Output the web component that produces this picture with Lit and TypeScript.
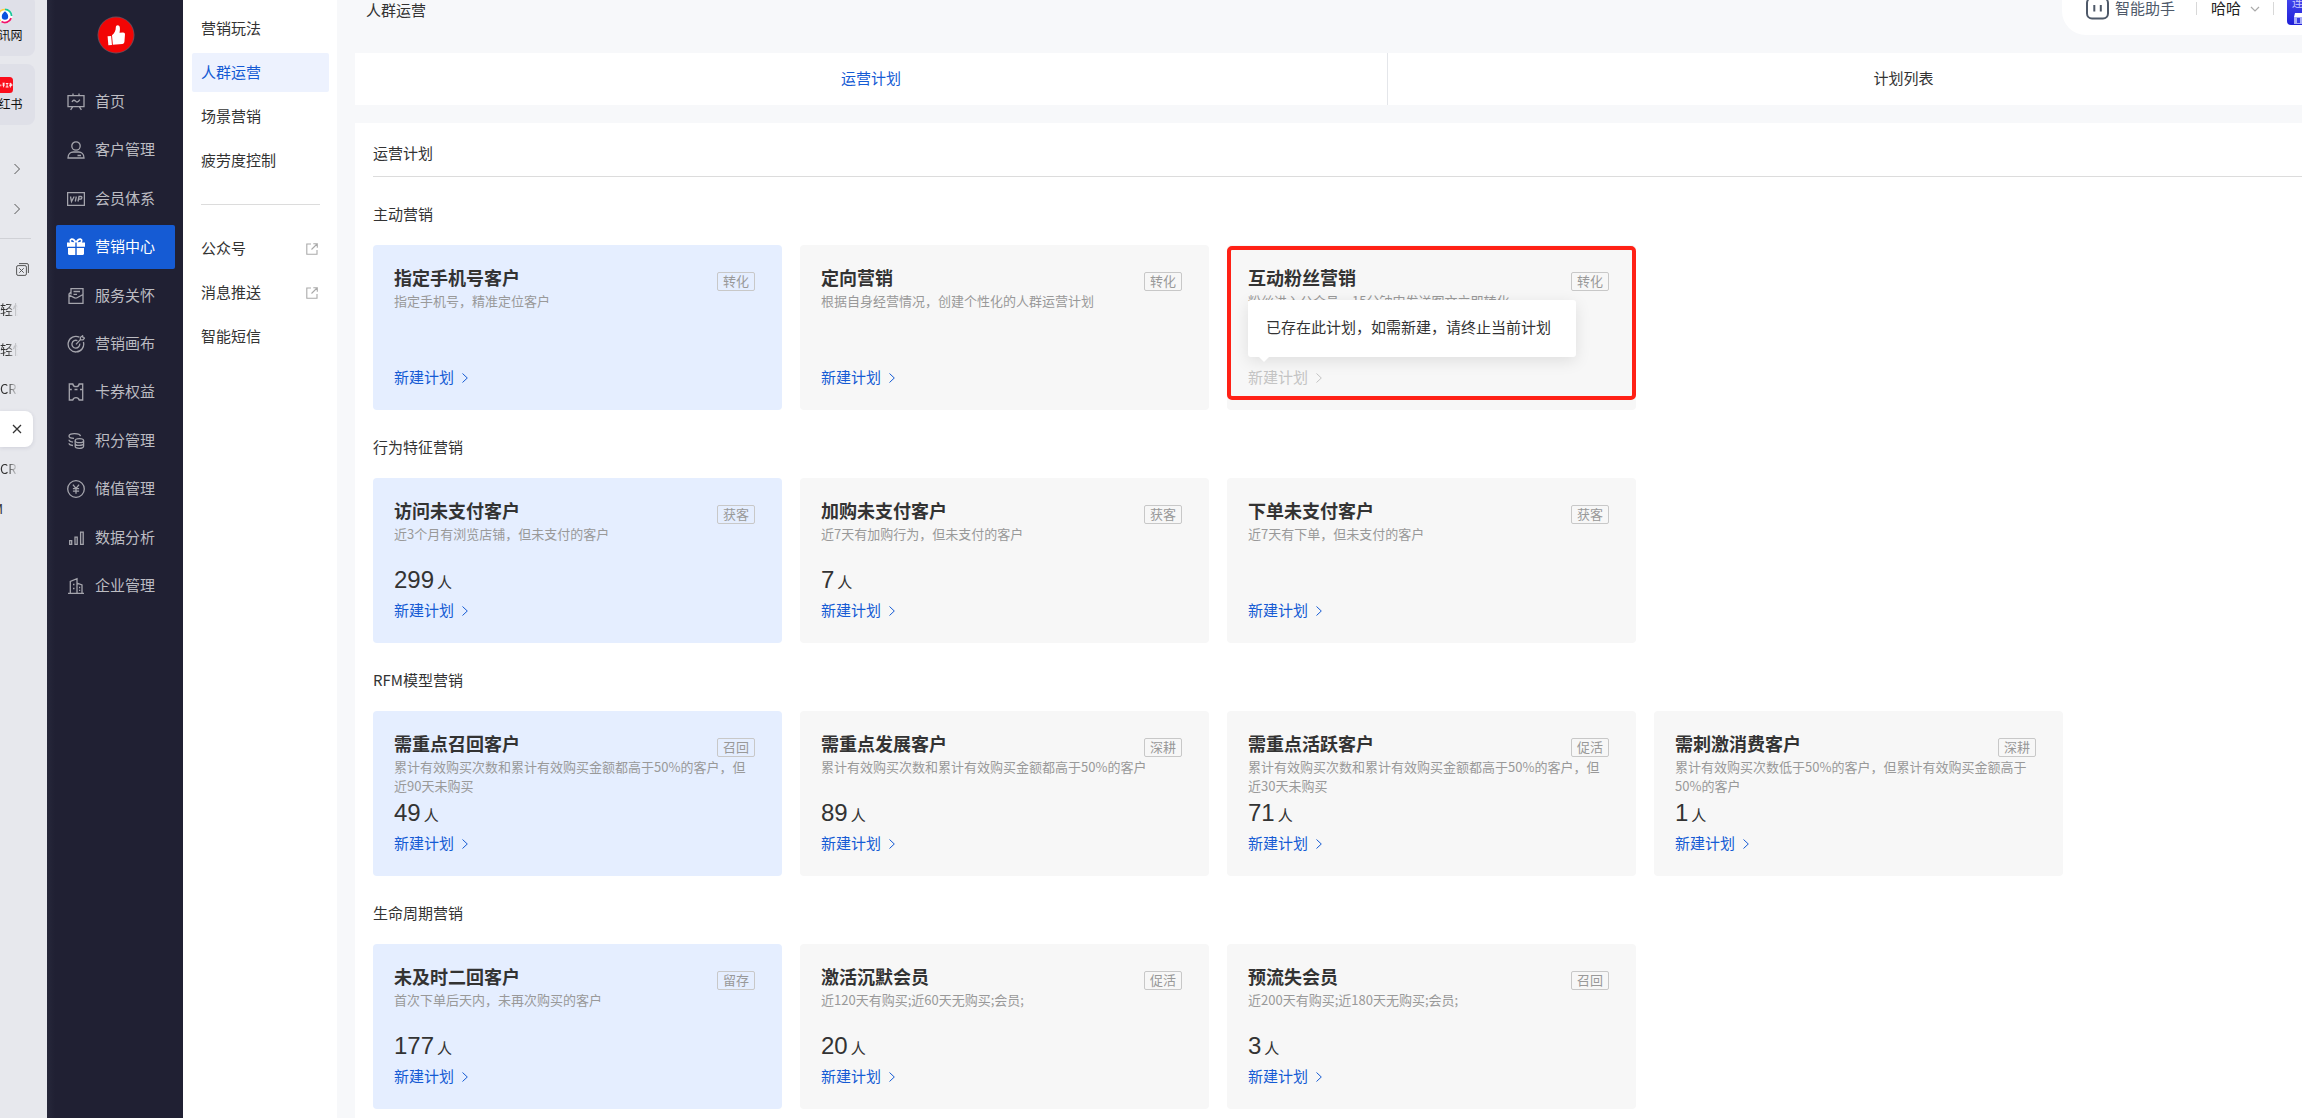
import { LitElement, html, css, svg, nothing, TemplateResult } from "lit";
import { customElement, property } from "lit/decorators.js";
import { classMap } from "lit/directives/class-map.js";

interface Plan {
  title: string;
  desc: string;
  tag: string;
  count?: number;
  notice?: string;
}

interface Section {
  name: string;
  plans: Plan[];
}

const SECTIONS: Section[] = [
  {
    name: "主动营销",
    plans: [
      { title: "指定手机号客户", desc: "指定手机号，精准定位客户", tag: "转化" },
      { title: "定向营销", desc: "根据自身经营情况，创建个性化的人群运营计划", tag: "转化" },
      {
        title: "互动粉丝营销",
        desc: "粉丝进入公众号，15分钟内发送图文立即转化",
        tag: "转化",
        notice: "已存在此计划，如需新建，请终止当前计划",
      },
    ],
  },
  {
    name: "行为特征营销",
    plans: [
      { title: "访问未支付客户", desc: "近3个月有浏览店铺，但未支付的客户", tag: "获客", count: 299 },
      { title: "加购未支付客户", desc: "近7天有加购行为，但未支付的客户", tag: "获客", count: 7 },
      { title: "下单未支付客户", desc: "近7天有下单，但未支付的客户", tag: "获客" },
    ],
  },
  {
    name: "RFM模型营销",
    plans: [
      { title: "需重点召回客户", desc: "累计有效购买次数和累计有效购买金额都高于50%的客户，但近90天未购买", tag: "召回", count: 49 },
      { title: "需重点发展客户", desc: "累计有效购买次数和累计有效购买金额都高于50%的客户", tag: "深耕", count: 89 },
      { title: "需重点活跃客户", desc: "累计有效购买次数和累计有效购买金额都高于50%的客户，但近30天未购买", tag: "促活", count: 71 },
      { title: "需刺激消费客户", desc: "累计有效购买次数低于50%的客户，但累计有效购买金额高于50%的客户", tag: "深耕", count: 1 },
    ],
  },
  {
    name: "生命周期营销",
    plans: [
      { title: "未及时二回客户", desc: "首次下单后天内，未再次购买的客户", tag: "留存", count: 177 },
      { title: "激活沉默会员", desc: "近120天有购买;近60天无购买;会员;", tag: "促活", count: 20 },
      { title: "预流失会员", desc: "近200天有购买;近180天无购买;会员;", tag: "召回", count: 3 },
    ],
  },
];

const ICONS: Record<string, TemplateResult> = {
  board: svg`<path d="M1 2.700h16v11H1zM6 .6v1.600M12 .6v1.600M5.600 13.900l-2 3M12.400 13.900l2 3M5 9c1-2.200 2.400-2.200 3.600-.8s2.400 1 4.200-1.600"/>`,
  user: svg`<circle cx="9" cy="5" r="4.200"/><path d="M1 17c0-4 2.600-6 5.400-6h5.200c2.800 0 5.400 2 5.400 6zM10.500 14.500H14"/>`,
  vip: svg`<path d="M.6 2.700h16.800v12.600H.6z"/><path d="M3.500 6.500l1 5 2.700-5M9.300 6.500l-1 5M11 11.500l1-5h2c1.400 0 1.200 2.700-.8 2.700h-1.600"/>`,
  gift: svg`<path fill="currentColor" stroke="none" d="M0 4.500h3.200C1.500 2.500 3 .3 5 .3c1.800 0 3 1.200 4 2.700 1-1.500 2.200-2.700 4-2.700 2 0 3.500 2.200 1.800 4.200H18v4.200H9.700V4.500H8.300v4.200H0zM5 1.900c-1.200 0-1.400 1.600 0 2.200l2.300.2C6.800 3 6 1.900 5 1.900zm8 0c-1 0-1.800 1.100-2.300 2.400l2.300-.2c1.400-.6 1.200-2.200 0-2.200zM1 10h7.300v7H2.200C1.500 17 1 16.500 1 15.800zm8.700 0H17v5.800c0 .7-.5 1.200-1.200 1.200H9.700z"/>`,
  care: svg`<path d="M4 7.500V1.700h12V9M4 5L2 7v9.300h14V7.500l-6 3.300c-.8.500-1.600.5-2.400 0L2 8M6.500 4.500h6.500M6.500 7.300h3.500"/>`,
  target: svg`<path d="M12.400 2.200A7.800 7.800 0 1 0 16.400 7M10.400 5.600a3.900 3.900 0 1 0 2.300 3M9 9.400l4.600-5M13.300 4.700l.2-2.400L15.600.8l.4 1.700 1.600.5-1.600 1.900z"/>`,
  coupon: svg`<path d="M2.300 1h3.500c.4 1.800 1.600 2.700 3.200 2.700S11.800 2.800 12.200 1h3.500v16h-3.500c-.4-1.500-1.600-2.300-3.200-2.300S6.200 15.500 5.800 17H2.300zM2.300 6.500h2.500M13 6.500h2.700M7.500 6.500h3"/>`,
  coins: svg`<path d="M13.500 4.200C13 .8 2 .6 2 4c0 1.400 2 2.300 5 2.400M2 7.800c0 1.300 1.700 2 4 2.300M2 11.300c0 1.200 1.700 2 4 2.200"/><ellipse cx="12.400" cy="8.700" rx="4.200" ry="2"/><path d="M8.200 8.700v5.600c0 2.800 8.400 2.800 8.400 0V8.700M8.200 11.500c0 2.600 8.400 2.600 8.400 0"/>`,
  yen: svg`<circle cx="9" cy="9" r="8.300"/><path d="M5.900 4.700L9 8.400l3.100-3.700M9 8.400v5.400M5.900 8.700h6.200M5.900 11.200h6.200"/>`,
  chart: svg`<path d="M2.700 11.700h2v3.600h-2zM8 8.200h2.200v7.100H8zM13.600 3.200h2.600v12.100h-2.600z"/>`,
  building: svg`<path d="M1 16.300h16M3.300 16V4.500L10 1.700V16M10 6.200l5 1.800v8M6 7.500h1.500M6 11.500h1.500M12 10.500h1.200M12 13.300h1.200"/>`,
};

const MENU: [string, string][] = [
  ["board", "首页"],
  ["user", "客户管理"],
  ["vip", "会员体系"],
  ["gift", "营销中心"],
  ["care", "服务关怀"],
  ["target", "营销画布"],
  ["coupon", "卡券权益"],
  ["coins", "积分管理"],
  ["yen", "储值管理"],
  ["chart", "数据分析"],
  ["building", "企业管理"],
];

const arrow = html`<svg class="arrow" viewBox="0 0 8 12" aria-hidden="true"><path d="M1.500 1.500L6.300 6l-4.800 4.500" /></svg>`;

const FONT = css`
  :host {
    font-family: "Liberation Sans", "Noto Sans CJK SC", sans-serif;
    font-size: 15px;
    line-height: 22px;
    color: #333;
  }
  * {
    box-sizing: border-box;
  }
  a {
    color: inherit;
    text-decoration: none;
  }
  button {
    font: inherit;
    color: inherit;
    background: none;
    border: 0;
    padding: 0;
    cursor: pointer;
  }
  svg {
    display: block;
    flex: none;
    fill: none;
    stroke: currentColor;
  }
`;

@customElement("browser-rail")
export class BrowserRail extends LitElement {
  static styles = [
    FONT,
    css`
      :host {
        display: flex;
        flex-direction: column;
        overflow: hidden;
        background: #e7e8ed;
        font-family: "Noto Sans CJK SC", sans-serif;
        font-size: 12px;
        line-height: 16px;
      }
      .tiles {
        display: grid;
        gap: 8px;
        margin: -5px 0 24px -26px;
      }
      .tile {
        display: flex;
        flex-direction: column;
        align-items: center;
        gap: 3px;
        width: 61px;
        height: 61px;
        padding-top: 13px;
        border-radius: 8px;
        background: #dfe0e8;
        color: #111;
      }
      .tile svg {
        width: 16px;
        height: 16px;
        stroke: none;
      }
      .row {
        display: flex;
        align-items: center;
        width: 100%;
        height: 40px;
        color: #555;
      }
      .fold {
        justify-content: flex-end;
        padding-right: 26px;
      }
      .copy {
        justify-content: flex-end;
        padding-right: 18px;
      }
      .row svg {
        width: 8px;
        height: 12px;
      }
      .row .pages {
        width: 13px;
        height: 13px;
      }
      .rule {
        width: 31px;
        height: 1px;
        margin: 9px 0 10px;
        background: #d0d1d6;
      }
      .name {
        width: 18px;
        overflow: hidden;
        white-space: nowrap;
        font-size: 13px;
        color: #333;
        mask-image: linear-gradient(90deg, #000 40%, transparent);
      }
      .tail {
        display: flex;
        justify-content: flex-end;
        width: 3px;
        overflow: hidden;
        font-size: 13px;
        color: #333;
      }
      .current {
        display: flex;
        align-items: center;
        justify-content: flex-end;
        width: 33px;
        height: 36px;
        padding-right: 11px;
        border-radius: 0 8px 8px 0;
        background: #fff;
        box-shadow: 0 1px 4px rgba(40, 40, 80, 0.12);
      }
      .current svg {
        width: 10px;
        height: 10px;
        color: #333;
      }
    `,
  ];

  render() {
    const chevron = html`<svg viewBox="0 0 8 12"><path d="M1.500 1l5 5-5 5" /></svg>`;
    return html`
      <div class="tiles">
        <a class="tile" href="#">
          <svg viewBox="0 0 16 16">
            <circle cx="8" cy="8" r="7.500" fill="#fff" />
            <path d="M8 .5A7.500 7.500 0 0 1 15.500 8h-1.800A5.700 5.700 0 0 0 8 2.300z" fill="#19c79a" />
            <path d="M15 10.500A7.500 7.500 0 0 1 4 14.300l1-1.500a5.700 5.700 0 0 0 8.300-3z" fill="#f0146a" />
            <path d="M3 13.500A7.500 7.500 0 0 1 8 .5v1.800a5.700 5.700 0 0 0-3.800 10z" fill="#ffd04a" />
            <path d="M8 3.300c2 1.600 3.200 3.400 3.200 5.200a3.200 3.200 0 0 1-6.400 0c0-1.800 1.200-3.600 3.200-5.200z" fill="#0c52e0" />
          </svg>
          <span>腾讯网</span>
        </a>
        <a class="tile" href="#">
          <svg viewBox="0 0 16 16">
            <rect width="16" height="16" rx="3.500" fill="#fb0d1b" />
            <g stroke="#fff" stroke-width=".9">
              <path d="M2.500 6v4.500M1.300 7.500v1.800M3.800 7.500v1.800M5.500 6.200h2.300M5.300 8h2.700M6.600 6v4.300M8.800 6.500h2.600M10.100 6.500v3.600M8.600 10h3M12.300 7h2.500v2M13.400 5.800v4.700M12.100 8.700h2.600" fill="none" />
            </g>
          </svg>
          <span>小红书</span>
        </a>
      </div>
      <button class="row fold" aria-label="展开">${chevron}</button>
      <button class="row fold" aria-label="展开">${chevron}</button>
      <div class="rule"></div>
      <button class="row copy" aria-label="关闭">
        <svg class="pages" viewBox="0 0 13 13">
          <rect x=".6" y="2.600" width="9.800" height="9.800" rx="1.500" />
          <path d="M3 .6h8a1.400 1.400 0 0 1 1.400 1.400v8M3.300 5.300l4.400 4.400M7.700 5.300L3.300 9.700" />
        </svg>
      </button>
      <a class="row" href="#"><span class="name">轻快</span></a>
      <a class="row" href="#"><span class="name">轻快</span></a>
      <a class="row" href="#"><span class="name">CRM</span></a>
      <div class="row">
        <div class="current">
          <button aria-label="关闭"><svg viewBox="0 0 10 10"><path d="M1 1l8 8M9 1L1 9" stroke-width="1.300" /></svg></button>
        </div>
      </div>
      <a class="row" href="#"><span class="name">CRM</span></a>
      <a class="row" href="#"><span class="tail">M</span></a>
    `;
  }
}

@customElement("main-menu")
export class MainMenu extends LitElement {
  static styles = [
    FONT,
    css`
      :host {
        display: flex;
        flex-direction: column;
        align-items: center;
        gap: 26px;
        padding: 16px 8px 0 9px;
        background: linear-gradient(90deg, #26273a, #202033 8px);
        color: #bcbcc2;
      }
      .avatar {
        width: 38px;
        height: 38px;
        stroke: none;
      }
      .menu {
        display: flex;
        flex-direction: column;
        justify-content: space-between;
        align-self: stretch;
        height: 528px;
      }
      .item {
        display: flex;
        align-items: center;
        gap: 10px;
        height: 44px;
        padding-left: 11px;
        border-radius: 2px;
      }
      .item svg {
        width: 18px;
        height: 18px;
        stroke-width: 1.3;
        opacity: 0.85;
      }
      .active {
        background: #155bd4;
        color: #fff;
      }
      .active svg {
        opacity: 1;
      }
    `,
  ];

  render() {
    return html`
      <svg class="avatar" viewBox="0 0 38 38" role="img" aria-label="头像">
        <circle cx="19" cy="19" r="18.500" fill="#6b4a58" />
        <circle cx="19" cy="19" r="17.600" fill="#f20505" />
        <g fill="#fff" transform="rotate(-5 19 19)">
          <path d="M10.500 19.500h3.600v9h-3.600z" />
          <path d="M15 28.500v-9.700c3-2 4.200-4.500 4.500-7.600.2-2.700 4-2.500 4 .8 0 2-.4 3.500-.8 5h3.300c1.500 0 2.200 1 2 2.300l-1.200 7.200c-.2 1.200-1 2-2.300 2z" />
        </g>
      </svg>
      <nav class="menu">
        ${MENU.map(
          ([icon, label]) => html`
            <a href="#" class=${classMap({ item: true, active: icon === "gift" })}>
              <svg viewBox="0 0 18 18" aria-hidden="true">${ICONS[icon]}</svg>${label}
            </a>
          `
        )}
      </nav>
    `;
  }
}

@customElement("sub-menu")
export class SubMenu extends LitElement {
  static styles = [
    FONT,
    css`
      :host {
        display: block;
        padding: 9px 8px 0 9px;
        background: #fff;
      }
      .group {
        display: grid;
        gap: 5px;
      }
      .item {
        display: flex;
        align-items: center;
        justify-content: space-between;
        height: 39px;
        padding: 0 11px 0 9px;
        border-radius: 2px;
      }
      .active {
        background: #edf2fe;
        color: #155bd4;
      }
      .rule {
        height: 1px;
        margin: 24px 9px;
        background: #dcdcdc;
      }
      .item svg {
        width: 12px;
        height: 12px;
        color: #aaa;
      }
    `,
  ];

  private item(label: string, active = false, external = false) {
    return html`<a href="#" class=${classMap({ item: true, active })}>
      ${label}
      ${external
        ? html`<svg viewBox="0 0 12 12" aria-hidden="true"><path d="M5 1H.8v10.200H11V7M7.300.7h4v4M11 1L5.500 6.500" stroke-width="1.100" /></svg>`
        : nothing}
    </a>`;
  }

  render() {
    return html`
      <nav class="group">
        ${this.item("营销玩法")} ${this.item("人群运营", true)} ${this.item("场景营销")} ${this.item("疲劳度控制")}
      </nav>
      <div class="rule"></div>
      <nav class="group">
        ${this.item("公众号", false, true)} ${this.item("消息推送", false, true)} ${this.item("智能短信")}
      </nav>
    `;
  }
}

@customElement("plan-card")
export class PlanCard extends LitElement {
  @property({ attribute: false }) plan!: Plan;
  @property({ type: Boolean, reflect: true }) primary = false;

  static styles = [
    FONT,
    css`
      :host {
        position: relative;
        display: block;
        height: 165px;
        padding: 22px 27px 0 21px;
        border-radius: 4px;
        background: #f7f7f7;
      }
      :host([primary]) {
        background: #e5eeff;
      }
      .head {
        display: flex;
        justify-content: space-between;
        align-items: flex-start;
        height: 24px;
      }
      .title {
        margin: 0;
        font-size: 18px;
        line-height: 24px;
        font-weight: 700;
      }
      .tag {
        margin-top: 5px;
        padding: 0 5px;
        border: 1px solid #c8c8c8;
        border-radius: 2px;
        font-size: 13px;
        line-height: 17px;
        color: #999;
      }
      .desc {
        margin: 0;
        height: 38px;
        font-family: "Noto Sans CJK SC", sans-serif;
        font-size: 13px;
        line-height: 19px;
        color: #999;
      }
      .count {
        display: flex;
        align-items: baseline;
        gap: 3px;
        height: 34px;
        margin: 1px 0 3px;
        line-height: 34px;
      }
      .number {
        font-size: 24px;
      }
      .create {
        display: flex;
        align-items: center;
        gap: 7px;
        color: #155bd4;
      }
      .create:disabled {
        color: #c4c4c4;
      }
      .arrow {
        width: 8px;
        height: 12px;
      }
      .frame {
        position: absolute;
        inset: 1px 0 10px;
        border: 4px solid #ff2116;
        border-radius: 5px;
        pointer-events: none;
      }
      .tip {
        position: absolute;
        top: 55px;
        left: 21px;
        width: 328px;
        padding: 17px 18px 18px;
        border-radius: 3px;
        background: #fff;
        box-shadow: 0 4px 16px rgba(0, 0, 0, 0.1);
        white-space: nowrap;
      }
      .tip::after {
        content: "";
        position: absolute;
        top: 100%;
        left: 11px;
        border: 5px solid transparent;
        border-top-color: #fff;
        border-bottom: 0;
      }
    `,
  ];

  render() {
    const { title, desc, tag, count, notice } = this.plan;
    return html`
      <div class="head">
        <h3 class="title">${title}</h3>
        <span class="tag">${tag}</span>
      </div>
      <p class="desc">${desc}</p>
      <div class="count">${count === undefined ? nothing : html`<span class="number">${count}</span><span>人</span>`}</div>
      <button class="create" ?disabled=${!!notice}>新建计划${arrow}</button>
      ${notice ? html`<div class="tip" role="tooltip">${notice}</div><div class="frame"></div>` : nothing}
    `;
  }
}

@customElement("app-root")
export class AppRoot extends LitElement {
  static styles = [
    FONT,
    css`
      :host {
        display: block;
        overflow: hidden;
        height: 100vh;
        background: #f7f8fa;
      }
      .shell {
        display: grid;
        grid-template-columns: 47px 136px 154px 1fr;
        width: calc(100% + 135px);
        min-height: 100vh;
      }
      .main {
        padding: 0 18px;
      }
      .top {
        display: flex;
        justify-content: space-between;
        height: 53px;
      }
      .crumb {
        margin: 0;
        padding-left: 11px;
        font-size: 15px;
        font-weight: 400;
      }
      .tools {
        display: flex;
        align-items: center;
        gap: 13px;
        width: 357px;
        height: 35px;
        padding: 0 0 18px 24px;
        border-radius: 0 0 0 24px;
        background: #fff;
      }
      .helper {
        display: flex;
        align-items: center;
        gap: 6px;
        color: #4e5969;
      }
      .helper svg {
        width: 23px;
        height: 23px;
      }
      .bar {
        width: 1px;
        height: 13px;
        margin: 0 1px 0 8px;
        background: #d8d8d8;
      }
      .account + .bar {
        margin: 0;
      }
      .account {
        display: flex;
        align-items: center;
        gap: 9px;
        color: #222;
      }
      .account svg {
        width: 10px;
        height: 6px;
        color: #aaa;
      }
      .promo {
        flex: none;
        display: flex;
        flex-direction: column;
        width: 34px;
        height: 32px;
        padding-left: 5px;
        border-radius: 4px;
        background: linear-gradient(#4a4df0, #2020d8);
        color: #c9ccff;
        font-size: 11px;
        line-height: 20px;
      }
      .promo svg {
        width: 24px;
        height: 11px;
        stroke: none;
      }
      .tabs {
        display: grid;
        grid-template-columns: 1fr 1fr;
        height: 52px;
        margin-bottom: 18px;
        background: #fff;
      }
      .tab + .tab {
        border-left: 1px solid #e4e6ea;
      }
      .tab.on {
        color: #155bd4;
      }
      .panel {
        padding: 20px 18px 18px;
        background: #fff;
      }
      .heading {
        margin: 0;
        padding-bottom: 11px;
        border-bottom: 1px solid #dcdcdc;
        font-size: 15px;
        font-weight: 400;
      }
      .section {
        display: grid;
        gap: 20px;
        padding-top: 26px;
      }
      .label {
        margin: 0;
        font-family: "Noto Sans CJK SC", sans-serif;
        font-size: 15px;
        font-weight: 400;
      }
      .cards {
        display: grid;
        grid-template-columns: repeat(auto-fill, 409px);
        gap: 18px;
      }
    `,
  ];

  render() {
    return html`
      <div class="shell">
        <browser-rail></browser-rail>
        <main-menu></main-menu>
        <sub-menu></sub-menu>
        <main class="main">
          <header class="top">
            <h1 class="crumb">人群运营</h1>
            <div class="tools">
              <button class="helper">
                <svg viewBox="0 0 23 23" aria-hidden="true">
                  <rect x="1" y="1" width="21" height="20.500" rx="5" stroke-width="2" />
                  <path d="M8.300 8v6.500M14.800 8v6.500" stroke-width="2" />
                </svg>
                智能助手
              </button>
              <span class="bar"></span>
              <button class="account">
                哈哈
                <svg viewBox="0 0 10 6" aria-hidden="true"><path d="M1 1l4 4 4-4" stroke-width="1.200" /></svg>
              </button>
              <span class="bar"></span>
              <a class="promo" href="#">
                连锁
                <svg viewBox="0 0 24 11" aria-hidden="true">
                  <path d="M3 0h18l1 4H2z" fill="#fff" />
                  <path d="M2 4h20v7H2z" fill="#a9adf8" />
                  <path d="M5 5h3v5H5zM10.500 5h3v5h-3zM16 5h3v5h-3z" fill="#3a3ce6" />
                </svg>
              </a>
            </div>
          </header>
          <div class="tabs" role="tablist">
            <button class="tab on" role="tab" aria-selected="true">运营计划</button>
            <button class="tab" role="tab" aria-selected="false">计划列表</button>
          </div>
          <div class="panel">
            <h2 class="heading">运营计划</h2>
            ${SECTIONS.map(
              (section) => html`
                <section class="section">
                  <h3 class="label">${section.name}</h3>
                  <div class="cards">
                    ${section.plans.map(
                      (plan, i) => html`<plan-card .plan=${plan} ?primary=${i === 0}></plan-card>`
                    )}
                  </div>
                </section>
              `
            )}
          </div>
        </main>
      </div>
    `;
  }
}
